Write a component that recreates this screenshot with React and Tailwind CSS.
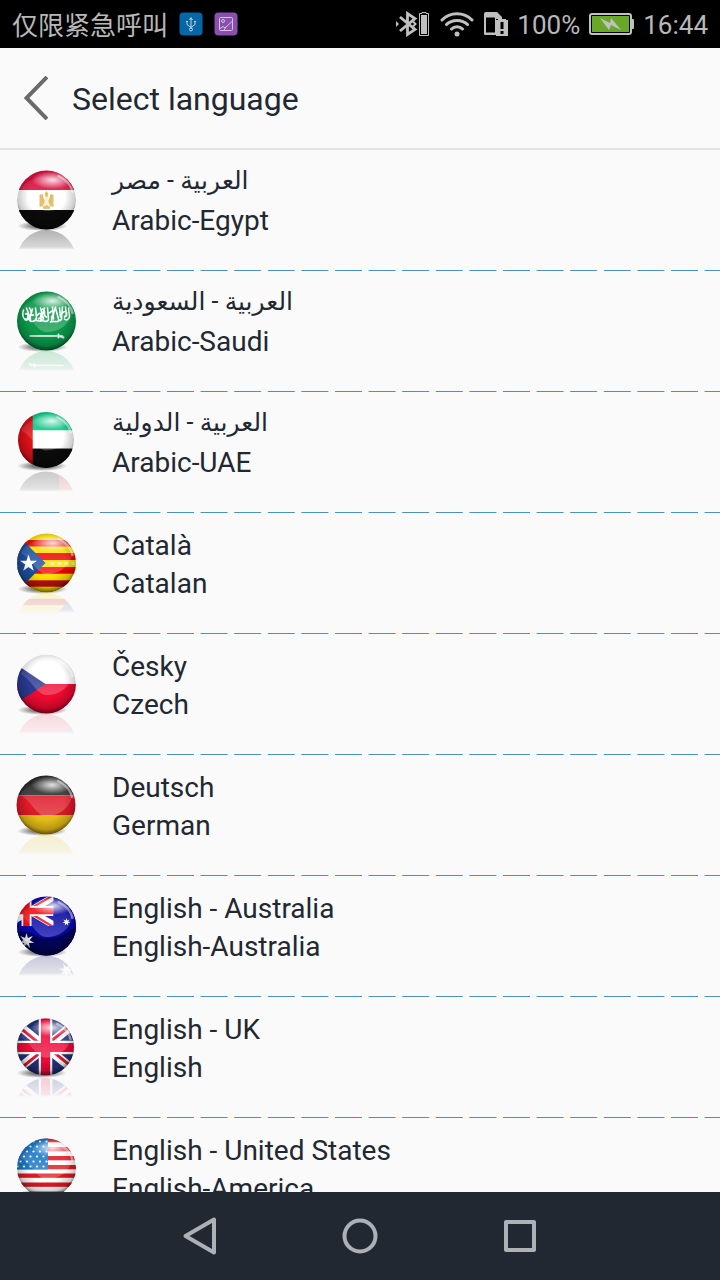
import { useId } from "react";

function starPoints(cx, cy, outer, inner, tips) {
  return Array.from({ length: tips * 2 }, (_, i) => {
    const r = i % 2 ? inner : outer;
    const a = (Math.PI * i) / tips - Math.PI / 2;
    return `${(cx + r * Math.cos(a)).toFixed(2)},${(cy + r * Math.sin(a)).toFixed(2)}`;
  }).join(" ");
}

const Band = ({ y, h, c }) => <rect x="-31" y={y} width="62" height={h} fill={c} />;

const Egypt = () => (
  <>
    <Band y={-31} h={21} c="#d8103f" />
    <Band y={-10} h={20} c="#ffffff" />
    <Band y={10} h={21} c="#0a0a0a" />
    <g fill="#dcb24a">
      <path d="M-7 -5 L-4 -6 L-2 1 L-1 -4 L-2 -6 L0 -9 L2 -6 L1 -4 L2 1 L4 -6 L7 -5 L7 7 L4 6 L3 9 L-3 9 L-4 6 L-7 7Z" />
      <path d="M-1.500 -3 L1.500 -3 L2 2 L4 7 L0 5 L-4 7 L-2 2Z" fill="#f7edcf" />
    </g>
  </>
);

const Saudi = () => (
  <>
    <Band y={-31} h={62} c="#0a9a4a" />
    <g fill="none" stroke="#fff" strokeWidth="1.600" strokeLinecap="round">
      <path d="M-23 -11c-2 5 0 10 3 9s1-7-1-5M-20 -13l4 11M-17 -13c3 3 0 8 4 7M-14 -12l-2 7c-1 4-5 5-6 3M-11 -13l1 9c0 4-5 6-7 3M-9 -6c4-5 5 2 1 4M-6 -13l3 11M-4 -12c5 2-1 7 4 8M-2 -13l-4 13M1 -13l1 11c0 3-5 3-6 1M3 -8c4-5 6 1 2 4M6 -14l1 12M9 -14l-4 13M9 -13l3 11c1 3 4 1 3-2M13 -13l1 9M16 -14l-1 10M16 -8c4-4 6 1 2 4M19 -14l1 9M22 -13l1 8c0 3-3 5-5 3M-13 0c3-2 5 1 8 0M4 1c3-2 5 1 8-1" />
      <path d="M-16.500 15H16" strokeWidth="1.300" />
      <path d="M12 13.500v3M14 15.500l3 1" strokeWidth="2" />
    </g>
  </>
);

const Emirates = () => (
  <>
    <Band y={-31} h={21} c="#08c888" />
    <Band y={-10} h={19} c="#ffffff" />
    <Band y={9} h={22} c="#0b0b0b" />
    <rect x="-31" y="-31" width="17" height="62" fill="#dd1018" />
  </>
);

const Catalonia = () => (
  <>
    <Band y={-31} h={62} c="#ffdf00" />
    <Band y={-23} h={6.5} c="#e81010" />
    <Band y={-10} h={7} c="#ee0808" />
    <Band y={4} h={6.7} c="#ee0505" />
    <Band y={17.3} h={6.4} c="#c00c10" />
    <path d="M4 0.500h25" stroke="#fff08a" strokeWidth="3" strokeDasharray="4 3" />
    <path d="M-31 -30 L-1 0 L-31 30Z" fill="#1c4f9e" />
    <polygon points={starPoints(-18, 0.5, 9, 3.5, 5)} fill="#fff" />
  </>
);

const Czechia = () => (
  <>
    <Band y={-31} h={31} c="#ffffff" />
    <Band y={0} h={31} c="#ee0a30" />
    <path d="M-31 -20 L-1 0 L-31 20Z" fill="#2a3990" />
  </>
);

const Germany = () => (
  <>
    <Band y={-31} h={21.5} c="#2c2c2c" />
    <Band y={-9.5} h={19.5} c="#e01828" />
    <Band y={10} h={21} c="#e6bd18" />
  </>
);

const Australia = () => (
  <>
    <Band y={-31} h={62} c="#0808a8" />
    <path d="M-42 -30L7 -1M-42 0L7 -29" stroke="#fff" strokeWidth="7" />
    <path d="M-20 -15L7 1M-20 -15L7 -31" stroke="#e81420" strokeWidth="2.200" />
    <path d="M-20 -31V0M-31 -15H7" stroke="#fff" strokeWidth="10" />
    <path d="M-20 -31V0M-31 -15H7" stroke="#ee1018" strokeWidth="6.500" />
    <path d="M7 -31H31V31H-31V0H7Z" fill="#0808a8" />
    <path d="M-31 6C-10 4 -14 12 2 12C16 12 22 4 31 0V31H-31Z" fill="#000028" opacity="0.600" />
    <polygon points={starPoints(-20, 15, 8, 3.2, 7)} fill="#fff" />
    <polygon points={starPoints(20, -4, 4, 1.8, 7)} fill="#fff" />
  </>
);

const Britain = () => (
  <>
    <Band y={-31} h={62} c="#24317c" />
    <path d="M-31 -25L31 25M31 -25L-31 25" stroke="#fff" strokeWidth="9" />
    <path d="M-31 -23.500L0 1.500M0 -1.500L31 23.500M31 -26.500L0 -1.500M0 1.500L-31 26.500" stroke="#e81430" strokeWidth="3" />
    <path d="M0 -31V31M-31 0.500H31" stroke="#fff" strokeWidth="14" />
    <path d="M0 -31V31M-31 0.500H31" stroke="#ee0838" strokeWidth="9.500" />
  </>
);

const America = () => (
  <>
    <Band y={-31} h={62} c="#ffffff" />
    {[-30, -21, -12, -3, 5.5, 14.5, 23.5].map((y) => (
      <Band key={y} y={y} h={4.3} c="#e01822" />
    ))}
    <rect x="-31" y="-31" width="32.500" height="32.500" fill="#1a78c4" />
    {[-25, -20, -15, -10, -5, 0].map((y, r) =>
      [-26, -19.5, -13, -6.5, 0].map((x) => (
        <circle key={`${x}${y}`} cx={x + (r % 2 ? -3 : 0)} cy={y - 1.5} r="1.100" fill="#fff" />
      ))
    )}
  </>
);

function FlagBall({ Flag, radius = 29.5, cx = 30.5, cy = 32, fade = 0.2 }) {
  const id = useId();
  const k = radius / 29.5;
  return (
    <svg viewBox="0 0 64 84" className="mt-4.5 h-21 w-16 shrink-0" aria-hidden="true">
      <defs>
        <clipPath id={`${id}b`}>
          <circle r="29.500" />
        </clipPath>
        <radialGradient id={`${id}e`} cx="0.500" cy="0.430" r="0.570">
          <stop offset="0.550" stopColor="#000" stopOpacity="0" />
          <stop offset="0.850" stopColor="#000" stopOpacity="0.200" />
          <stop offset="1" stopColor="#000" stopOpacity="0.600" />
        </radialGradient>
        <linearGradient id={`${id}g`} x1="0" y1="0" x2="0" y2="1">
          <stop offset="0" stopColor="#fff" stopOpacity="0.050" />
          <stop offset="1" stopColor="#fff" stopOpacity="0.240" />
        </linearGradient>
        <radialGradient id={`${id}s`}>
          <stop offset="0.400" stopColor="#000" stopOpacity="0.500" />
          <stop offset="1" stopColor="#000" stopOpacity="0" />
        </radialGradient>
        <radialGradient id={`${id}h`}>
          <stop offset="0" stopColor="#fff" stopOpacity="0.850" />
          <stop offset="1" stopColor="#fff" stopOpacity="0" />
        </radialGradient>
        <linearGradient id={`${id}f`} gradientUnits="userSpaceOnUse" x1="0" y1="62" x2="0" y2="82">
          <stop offset="0" stopColor="#fff" />
          <stop offset="0.850" stopColor="#777" />
          <stop offset="1" stopColor="#000" />
        </linearGradient>
        <mask id={`${id}m`} maskUnits="userSpaceOnUse" x="0" y="60" width="64" height="22">
          <rect x="0" y="60" width="64" height="22" fill={`url(#${id}f)`} />
        </mask>
      </defs>
      <g mask={`url(#${id}m)`}>
        <g transform={`translate(${cx} ${cy + 59.5}) rotate(180) scale(${k})`} opacity={fade}>
          <g clipPath={`url(#${id}b)`}>
            <Flag />
          </g>
        </g>
      </g>
      <ellipse cx={cx - 4} cy={cy + 26} rx="25" ry="5" fill={`url(#${id}s)`} />
      <g transform={`translate(${cx} ${cy}) scale(${k})`}>
        <g clipPath={`url(#${id}b)`}>
          <Flag />
          <path d="M-26 -10A28 22 0 0 1 26 -10C24 4 12 11 0 11C-10 11 -14 -4 -26 -10Z" fill={`url(#${id}g)`} />
          <circle r="29.500" fill={`url(#${id}e)`} />
          <ellipse cx="6" cy="-20" rx="21" ry="9" fill={`url(#${id}h)`} />
          <path d="M12 -24C20 -20 25 -14 26 -8" stroke="#fff" strokeWidth="2.500" strokeLinecap="round" fill="none" opacity="0.450" />
        </g>
      </g>
    </svg>
  );
}

const languages = [
  { native: "العربية - مصر", name: "Arabic-Egypt", rtl: true, Flag: Egypt, fade: 0.3 },
  { native: "العربية - السعودية", name: "Arabic-Saudi", rtl: true, Flag: Saudi },
  { native: "العربية - الدولية", name: "Arabic-UAE", rtl: true, Flag: Emirates, radius: 28, cx: 30, cy: 30 },
  { native: "Català", name: "Catalan", Flag: Catalonia },
  { native: "Česky", name: "Czech", Flag: Czechia, fade: 0.14 },
  { native: "Deutsch", name: "German", Flag: Germany, cx: 30 },
  { native: "English - Australia", name: "English-Australia", Flag: Australia },
  { native: "English - UK", name: "English", Flag: Britain, radius: 28.5, cx: 29.5 },
  { native: "English - United States", name: "English-America", Flag: America },
];

function DashedRule() {
  return (
    <svg className="block h-px w-full" aria-hidden="true">
      <line x1="-1" y1="0.500" x2="100%" y2="0.500" stroke="#4a90c2" strokeWidth="1" strokeDasharray="27 6.600" />
    </svg>
  );
}

function LanguageRow({ native, name, rtl, ...flag }) {
  return (
    <li>
      <button type="button" className="flex h-30 w-full items-start gap-8 px-4 text-left text-[28px] leading-[38px] text-[#222831]">
        <FlagBall {...flag} />
        <span className="flex flex-col items-start pt-3.5">
          {rtl ? (
            <span lang="ar" dir="rtl" className="h-[38px] font-['Roboto','DejaVu_Sans',sans-serif] text-[25px] leading-[34px]">
              {native}
            </span>
          ) : (
            <span>{native}</span>
          )}
          <span>{name}</span>
        </span>
      </button>
      <DashedRule />
    </li>
  );
}

function StatusBar() {
  return (
    <div className="flex h-12 shrink-0 items-center justify-between bg-black px-3 text-[26px] leading-none text-[#b8b8b8]">
      <div className="flex items-center gap-[11px]">
        <span lang="zh-CN" className="font-['Noto_Sans_CJK_SC',sans-serif]">仅限紧急呼叫</span>
        <svg viewBox="0 0 24 24" className="size-6" fill="none" stroke="#c4d4de" aria-hidden="true">
          <rect x="0.500" y="0.500" width="23" height="23" rx="4" fill="#0468a8" stroke="none" />
          <path d="M12 7V17M8 10V12.500L12 15.500L16 12.500V10M7 9.500H9M15 9.500H17M10.500 8L12 5.500L13.500 8" />
          <circle cx="12" cy="17.500" r="1.500" />
        </svg>
        <svg viewBox="0 0 24 24" className="size-6" fill="none" stroke="#d4c4dc" aria-hidden="true">
          <rect x="0.500" y="0.500" width="23" height="23" rx="4" fill="#8a50b0" stroke="none" />
          <rect x="5.500" y="5.500" width="13" height="13" rx="1" />
          <circle cx="9" cy="9" r="1.500" />
          <path d="M6 16.500L9 14.500L11 16L18 9.500M10 18.500L12 14.500" />
        </svg>
      </div>
      <div className="flex items-center gap-[9px]">
        <div className="flex items-center gap-2.5">
          <svg viewBox="0 0 34 26" className="h-[26px] w-[34px]" fill="none" stroke="#c0c0c0" strokeWidth="2.800" aria-hidden="true">
            <path d="M4 6L19 18.500L11.500 23.500V2.500L19 7.500L4 20" />
            <path d="M0 10L3 13L0 16Z" fill="#c0c0c0" stroke="none" />
            <path d="M17 10.500L19.500 13L17 15.500" strokeWidth="2" />
            <path d="M23.500 2.500H26V1.500H30V2.500H32.500V24.500H23.500Z" strokeWidth="1" />
            <rect x="25" y="4" width="6" height="19" fill="#c0c0c0" stroke="none" />
          </svg>
          <svg viewBox="0 0 34 26" className="h-[26px] w-[34px]" fill="none" stroke="#c0c0c0" strokeWidth="3" strokeLinecap="round" aria-hidden="true">
            <path d="M2 9C10 0.500 24 0.500 32 9M6.500 13.500C12 8 22 8 27.500 13.500M11.500 18C14.500 15 19.500 15 22.500 18" />
            <circle cx="17" cy="23" r="2.500" fill="#c0c0c0" stroke="none" />
          </svg>
          <svg viewBox="0 0 24 26" className="h-[26px] w-6" aria-hidden="true">
            <path fillRule="evenodd" d="M0 3Q0 1 2 1H13L18 6V8H12V22H15V24H1Q0 24 0 23ZM2 6.500V21.500H11V6.500Z" fill="#c0c0c0" />
            <path d="M12 9H14V8H22V9H24V25H12Z" fill="#c0c0c0" />
            <path d="M18 11V18M18 20V23" stroke="#000" strokeWidth="3" />
          </svg>
        </div>
        <span className="pt-0.5">100%</span>
        <svg viewBox="0 0 45 22" className="h-[22px] w-[45px]" aria-hidden="true">
          <rect x="1" y="1" width="41" height="20" rx="2" fill="#000" stroke="#c0c0c0" strokeWidth="2" />
          <rect x="3" y="3" width="37" height="16" fill="#68a828" />
          <path d="M42 6H44Q45 6 45 7V15Q45 16 44 16H42Z" fill="#c0c0c0" />
          <path d="M11 5L21 10L22 5L32 17L22 12L20 17Z" fill="#c0c0c0" />
        </svg>
        <span className="pt-0.5">16:44</span>
      </div>
    </div>
  );
}

function NavigationBar() {
  return (
    <nav className="flex h-22 shrink-0 items-center justify-center bg-[#222831]" aria-label="System">
      <button type="button" aria-label="Back" className="flex w-40 justify-center">
        <svg viewBox="0 0 40 40" className="size-10" fill="none" stroke="#adb0b4" strokeWidth="4" strokeLinejoin="round">
          <path d="M34 3.500V36.500L5.500 20Z" />
        </svg>
      </button>
      <button type="button" aria-label="Home" className="flex w-40 justify-center">
        <svg viewBox="0 0 40 40" className="size-10" fill="none" stroke="#adb0b4" strokeWidth="4">
          <circle cx="20" cy="20" r="15.500" />
        </svg>
      </button>
      <button type="button" aria-label="Recent apps" className="flex w-40 justify-center">
        <svg viewBox="0 0 40 40" className="size-10" fill="none" stroke="#adb0b4" strokeWidth="4" strokeLinejoin="round">
          <rect x="6" y="6" width="28" height="28" />
        </svg>
      </button>
    </nav>
  );
}

export default function App() {
  return (
    <div className="flex h-screen flex-col bg-[#fafafa] font-['Roboto','Noto_Sans_CJK_SC',sans-serif]">
      <StatusBar />
      <header className="flex h-[102px] shrink-0 items-center gap-6 border-b-2 border-[#e4e4e4] px-6 text-[#222831]">
        <button type="button" aria-label="Back">
          <svg viewBox="0 0 24 44" className="h-11 w-6" fill="none" stroke="#6a6a6a" strokeWidth="4">
            <path d="M23 1L2.500 22L23 43" />
          </svg>
        </button>
        <h1 className="pt-0.5 text-[32px] leading-10">Select language</h1>
      </header>
      <main className="min-h-0 flex-1 overflow-hidden">
        <ul>
          {languages.map((language) => (
            <LanguageRow key={language.name} {...language} />
          ))}
        </ul>
      </main>
      <NavigationBar />
    </div>
  );
}
